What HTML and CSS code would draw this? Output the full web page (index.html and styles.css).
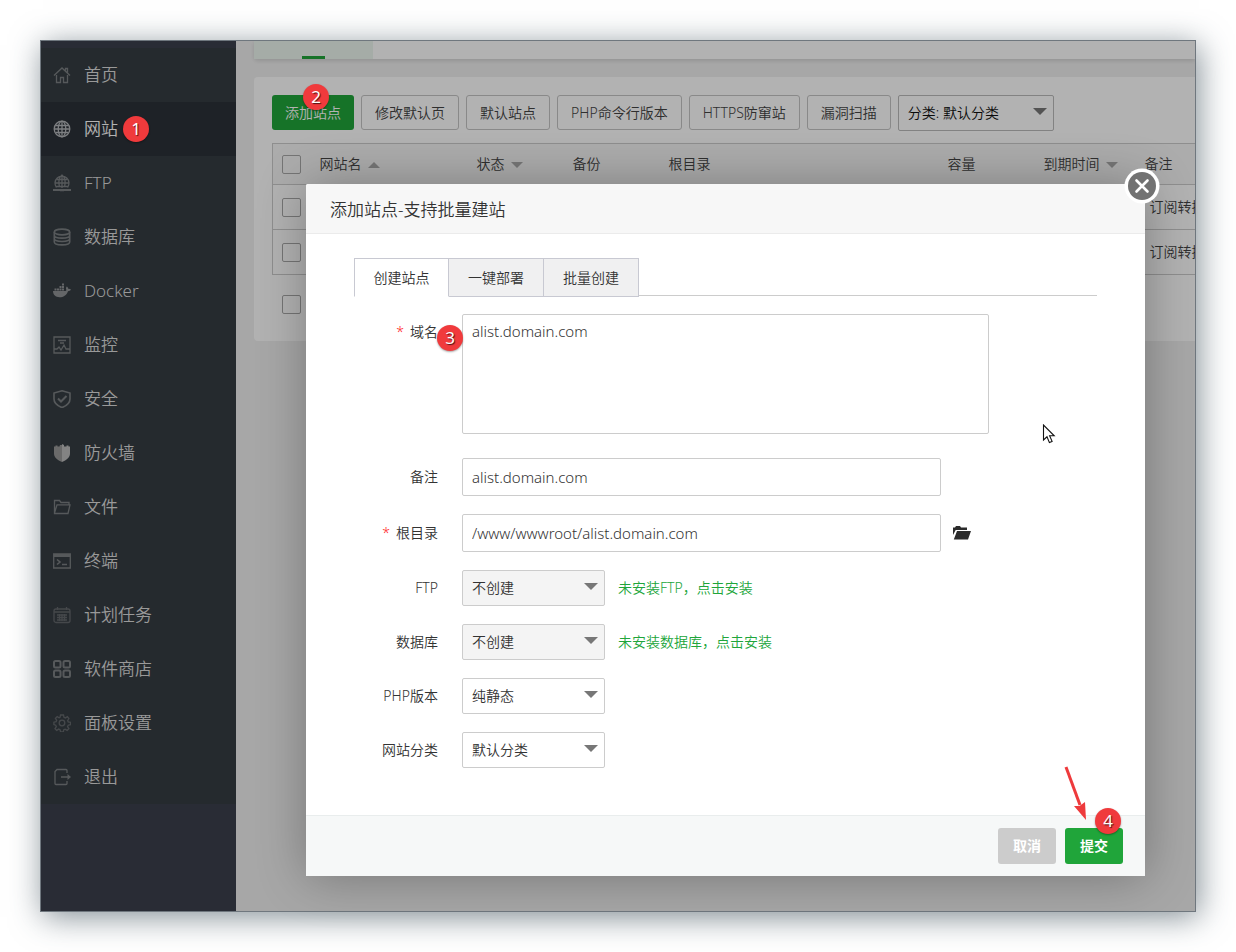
FILE: index.html
```html
<!DOCTYPE html>
<html lang="zh-CN">
<head>
<meta charset="utf-8">
<title>添加站点</title>
<link rel="stylesheet" href="styles.css">
</head>
<body>
<div class="window">
  <nav class="sidebar">
    <ul class="menu">
      <li><a href="#home"><svg class="icon" viewBox="0 0 18 18"><path d="M1 9.500 9 2l8 7.500M3.500 9v7.500h4v-5h3v5h4V9M12.500 4.500V2.500h2v4"/></svg>首页</a></li>
      <li><a href="#site" class="current"><svg class="icon bright" viewBox="0 0 18 18"><circle cx="9" cy="9" r="7.800"/><ellipse cx="9" cy="9" rx="3.800" ry="7.800"/><path d="M9 1.500v15M1.500 9h15M2.500 5.500h13M2.500 12.500h13"/></svg>网站<span class="badge badge-inline">1</span></a></li>
      <li><a href="#ftp"><svg class="icon" viewBox="0 0 18 18"><path d="M3.500 13.500a7 7 0 1 1 11 0M2.500 9h13M4 5.500h10M3.500 12.500h11M9 1v13M6.500 13C5 8 6 3 9 1c3 2 4 7 2.500 12"/><path d="M0 16h18M7 16.300h4" stroke-width="2"/></svg>FTP</a></li>
      <li><a href="#db"><svg class="icon" viewBox="0 0 18 18"><g stroke-width="1.600"><ellipse cx="9" cy="4" rx="7.700" ry="2.900"/><path d="M1.300 4v10c0 3.800 15.400 3.800 15.400 0V4M1.300 7.300c0 3.800 15.400 3.800 15.400 0M1.300 10.600c0 3.800 15.400 3.800 15.400 0"/></g></svg>数据库</a></li>
      <li><a href="#docker"><svg class="icon solid" viewBox="0 0 18 18"><path d="M0 9h12.500c.7 0 1-.5.800-1.200-.6-1.400-.3-2.500.5-3.300.9.600 1.300 1.400 1.400 2.300.9-.2 1.900 0 2.800.7-.7 1.200-1.600 1.700-3 1.700-1.500 4.300-4.500 6-8.500 6C2.500 15.200.2 13 0 9zM1.500 6.500h2v2h-2zM4 6.500h2v2H4zM6.500 6.500h2v2h-2zM9 6.500h2v2H9zM6.500 4h2v2h-2zM9 4h2v2H9zM9 1.500h2v2H9z"/></svg>Docker</a></li>
      <li><a href="#monitor"><svg class="icon" viewBox="0 0 18 18"><path d="M1 1h16v16H1zM5 4.500h8M7 7h4M1 13h3l2-2 2 3 3-5 2 4h4"/></svg>监控</a></li>
      <li><a href="#security"><svg class="icon" viewBox="0 0 18 18"><path d="M9 .800 17 3v6c0 4-3.500 6.800-8 8.600C4.500 15.800 1 13 1 9V3z" stroke-width="1.600"/><path d="m5 8.500 3 3L13.500 6" stroke-width="2"/></svg>安全</a></li>
      <li><a href="#firewall"><svg class="icon shield" viewBox="0 0 18 18"><path class="half" d="M1 2.500h1.500V1.500h2v1h2L7 1h2v17c-4.500-2-8-4.500-8-8.500z"/><path class="full" d="M9 0l2 1v1.500h2.500v-1h2v1H17v7c0 4-3.500 6.500-8 8.500z"/></svg>防火墙</a></li>
      <li><a href="#files"><svg class="icon" viewBox="0 0 18 18"><path d="M1.500 15V2.500h5l1.500 2h8V7M1.500 15 4 6.800h13L15 15.500H1.500z"/></svg>文件</a></li>
      <li><a href="#terminal"><svg class="icon" viewBox="0 0 18 18"><path d="M.700 2h16.600v14H.700z"/><path d="M1 3.500h16" stroke-width="3"/><path d="m4 7.500 3 2.500-3 2.500M9 12.500h5" stroke-width="1.600"/></svg>终端</a></li>
      <li><a href="#cron"><svg class="icon dim" viewBox="0 0 18 18"><rect x="1" y="3" width="16" height="13.500" rx="2"/><path d="M1 6h16M4.500 1v3M13.500 1v3M4 9h10M4 11.500h10M4 14h10M6.500 8v7M9 8v7M11.500 8v7"/></svg>计划任务</a></li>
      <li><a href="#soft"><svg class="icon" viewBox="0 0 18 18"><g stroke-width="2"><rect x="1" y="1" width="6.500" height="6.500" rx="1.500"/><rect x="10.500" y="1" width="6.500" height="6.500" rx="1.500"/><rect x="1" y="10.500" width="6.500" height="6.500" rx="1.500"/><rect x="10.500" y="10.500" width="6.500" height="6.500" rx="1.500"/></g></svg>软件商店</a></li>
      <li><a href="#config"><svg class="icon dim" viewBox="0 0 18 18"><circle cx="9" cy="9" r="2.800"/><path d="M7.500 1h3l.5 2.300 1.400.6 2-1.300 1.500 2-1.200 1.900.5 1.400 2.300.5v2.200l-2.300.6-.6 1.400 1.300 2-1.800 1.800-2-1.200-1.300.5-.5 2.300H7.600l-.6-2.300-1.300-.6-2 1.300-1.700-1.800 1.300-2-.6-1.400L.900 10.500V8.200l2.200-.5.600-1.400-1.300-2 1.800-1.700 1.900 1.200L7 3.300z"/></svg>面板设置</a></li>
      <li><a href="#exit"><svg class="icon" viewBox="0 0 18 18"><path d="M14 5V2.500a1 1 0 0 0-1-1H4L2 3.500v12a1 1 0 0 0 1 1h10a1 1 0 0 0 1-1V13M8 9h8"/><path d="m14.500 6 3.500 3-3.500 3z" fill="currentColor" stroke="none"/></svg>退出</a></li>
    </ul>
  </nav>

  <main class="content">
    <div class="top-tabs"><span class="top-tab"></span></div>
    <section class="card">
      <div class="toolbar">
        <button type="button" class="tool tool-primary">添加站点<span class="badge badge-over">2</span></button>
        <button type="button" class="tool">修改默认页</button>
        <button type="button" class="tool">默认站点</button>
        <button type="button" class="tool">PHP命令行版本</button>
        <button type="button" class="tool">HTTPS防窜站</button>
        <button type="button" class="tool">漏洞扫描</button>
        <span class="select select-wide"><select aria-label="分类"><option>分类: 默认分类</option></select></span>
      </div>
      <table class="sites">
        <colgroup><col class="c-check"><col class="c-name"><col class="c-small"><col class="c-small"><col class="c-root"><col class="c-small"><col class="c-date"><col class="c-note"></colgroup>
        <thead>
          <tr><th><input type="checkbox" aria-label="全选"></th><th>网站名<i class="sort sort-up"></i></th><th>状态<i class="sort"></i></th><th>备份</th><th>根目录</th><th>容量</th><th>到期时间<i class="sort"></i></th><th>备注</th></tr>
        </thead>
        <tbody>
          <tr><td><input type="checkbox" aria-label="选择站点"></td><td></td><td></td><td></td><td></td><td></td><td></td><td class="note">订阅转换</td></tr>
          <tr><td><input type="checkbox" aria-label="选择站点"></td><td></td><td></td><td></td><td></td><td></td><td></td><td class="note">订阅转换</td></tr>
        </tbody>
      </table>
      <div class="batch"><input type="checkbox" aria-label="批量选择"></div>
    </section>
  </main>

  <div class="overlay">
    <form class="dialog" role="dialog" aria-labelledby="dialog-title">
      <header class="dialog-head"><h1 id="dialog-title">添加站点-支持批量建站</h1></header>
      <button type="button" class="close" aria-label="关闭"><svg viewBox="0 0 36 36"><circle cx="18" cy="18" r="17.500" fill="#fff"/><circle cx="18" cy="18" r="14" fill="#727272"/><path d="m12.500 12.500 11 11m0-11-11 11" stroke="#fff" stroke-width="2.600" stroke-linecap="round"/></svg></button>
      <div class="dialog-body">
        <div class="tabs" role="tablist">
          <button type="button" role="tab" aria-selected="true" class="tab tab-on">创建站点</button>
          <button type="button" role="tab" class="tab">一键部署</button>
          <button type="button" role="tab" class="tab">批量创建</button>
        </div>
        <div class="row row-top">
          <label for="domain"><em>*</em>域名</label>
          <span class="field"><textarea id="domain">alist.domain.com</textarea><span class="badge badge-side">3</span></span>
        </div>
        <div class="row"><label for="note">备注</label><input type="text" class="text" id="note" value="alist.domain.com"></div>
        <div class="row"><label for="root"><em>*</em>根目录</label><input type="text" class="text" id="root" value="/www/wwwroot/alist.domain.com"><button type="button" class="browse" aria-label="选择目录"><svg viewBox="0 0 18 14"><path fill="#2b2b2b" d="M0 9V1.500h2L3 0h4l1 1.500h6V4H2.700zM4 5h14l-3 8.500H.800z"/></svg></button></div>
        <div class="row"><label for="ftp">FTP</label><span class="select select-off"><select id="ftp"><option>不创建</option></select></span><a class="install" href="#install-ftp">未安装FTP，点击安装</a></div>
        <div class="row"><label for="db">数据库</label><span class="select select-off"><select id="db"><option>不创建</option></select></span><a class="install" href="#install-db">未安装数据库，点击安装</a></div>
        <div class="row"><label for="php">PHP版本</label><span class="select"><select id="php"><option>纯静态</option></select></span></div>
        <div class="row"><label for="type">网站分类</label><span class="select"><select id="type"><option>默认分类</option></select></span></div>
      </div>
      <footer class="dialog-foot">
        <button type="button" class="action">取消</button>
        <button type="submit" class="action action-ok">提交<span class="badge badge-corner">4</span></button>
      </footer>
      <svg class="arrow" viewBox="0 0 24 56"><path d="M2 2 16 40" stroke="#ee3a3c" stroke-width="3"/><path d="M22 55 10 41l5.500 0L21 37z" fill="#ee3a3c"/></svg>
      <svg class="cursor" viewBox="0 0 14 20"><path d="M1.500 1v15l3.500-3.200L7.400 18.600l2.700-1.200-2.500-5.600h4.600z" fill="#fff" stroke="#111" stroke-width="1.100"/></svg>
    </form>
  </div>
</div>
</body>
</html>
```

FILE: styles.css
```css
* { box-sizing: border-box; }

body {
  margin: 0;
  padding: 40px;
  min-height: 100vh;
  display: flex;
  background: #fff;
  color: #333;
  font: 350 14px/20px "Noto Sans", "Noto Sans CJK SC", sans-serif;
}

button, input, select, textarea { font: inherit; color: inherit; margin: 0; }
a { text-decoration: none; color: inherit; }

.window {
  position: relative;
  flex: 1;
  min-width: 0;
  display: flex;
  border: 1px solid #6f777e;
  background: #f0f0f0;
  box-shadow: 3px 5px 30px rgba(50, 68, 80, .6);
}

/* Sidebar */
.sidebar { flex: 0 0 195px; padding-top: 7px; background: #3c404d; }
.menu { list-style: none; margin: 0; padding: 0; background: #363d43; }
.menu a {
  display: flex;
  align-items: center;
  height: 54px;
  padding-left: 12px;
  color: #dcdcdc;
  font-size: 17px;
}
.menu a.current { background: #2c3138; color: #fff; }
.icon {
  width: 18px;
  height: 18px;
  margin-right: 13px;
  fill: none;
  stroke: currentColor;
  stroke-width: 1.3;
  color: #7c8083;
}
.icon.bright { color: #b4b7ba; }
.icon.dim { color: #64686c; }
.icon.solid { fill: #909396; stroke: none; }
.icon.shield { stroke: none; }
.half { fill: #999; }
.full { fill: #bcbcbc; }

/* Numbered step markers */
.badge {
  z-index: 5;
  width: 26px;
  height: 26px;
  border-radius: 50%;
  background: #f03a3c;
  color: #fff;
  font-size: 17px;
  font-weight: 400;
  line-height: 26px;
  text-align: center;
  text-shadow: 1px 1px 1px rgba(0, 0, 0, .7);
  box-shadow: 0 1px 2px rgba(0, 0, 0, .35);
  pointer-events: none;
}
.badge-inline { position: relative; margin-left: 5px; }
.badge-over { position: absolute; left: 31px; top: -11px; }
.badge-side { position: absolute; left: -25px; top: 11px; }
.badge-corner { position: absolute; right: 2px; top: -20px; }

/* Page behind the dialog */
.content { flex: 1; min-width: 0; padding-left: 18px; overflow: hidden; }
.top-tabs { height: 18px; background: #fff; border-radius: 0 0 0 4px; box-shadow: 0 2px 4px rgba(0, 0, 0, .12); }
.top-tab { display: block; width: 119px; height: 18px; background: linear-gradient(#20a53a, #20a53a) center bottom / 23px 3px no-repeat #edf6ef; }
.card { margin-top: 18px; padding: 18px 0 27px 18px; background: #fff; border-radius: 4px 0 0 4px; }
.toolbar { display: flex; gap: 7px; }
.tool {
  position: relative;
  height: 35px;
  padding: 0 13px;
  border: 1px solid #c4c4c4;
  border-radius: 3px;
  background: #fff;
  color: #444;
  white-space: nowrap;
}
.tool-primary { border: 0; background: #20a53a; color: #fff; }

.sites { table-layout: fixed; width: 1040px; margin-top: 12px; border-collapse: collapse; border: 1px solid #ccc; }
.sites tr { height: 45px; border-bottom: 1px solid #ccc; }
.sites thead tr { height: 41px; background: #f6f6f6; }
.sites th, .sites td { padding: 0 0 0 9px; text-align: left; font-weight: 350; white-space: nowrap; color: #444; }
.sites .note { padding-left: 14px; }
.c-check { width: 38px; }
.c-name { width: 157px; }
.c-small { width: 96px; }
.c-root { width: 279px; }
.c-date { width: 101px; }
input[type="checkbox"] {
  display: block;
  width: 19px;
  height: 19px;
  appearance: none;
  border: 1px solid #a8a8a8;
  border-radius: 2px;
}
.batch { padding: 20px 0 0 10px; }
.sort {
  display: inline-block;
  margin-left: 6px;
  vertical-align: 1px;
  border: 6px solid transparent;
  border-top: 6px solid #aaa;
  border-bottom: 0;
}
.sort-up { border-top: 0; border-bottom: 6px solid #aaa; }

/* Select boxes */
.select { position: relative; display: flex; width: 143px; height: 36px; }
.select::after {
  content: "";
  position: absolute;
  right: 7px;
  top: 13px;
  border: 7px solid transparent;
  border-top-color: #777;
  border-bottom: 0;
  pointer-events: none;
}
.select select { flex: 1; padding: 0 9px; appearance: none; border: 1px solid #ccc; border-radius: 2px; background: #fff; }
.select-off select { background: #f4f4f4; }
.select-wide { width: 156px; }
.select-wide select { border-color: #bbb; color: #111; }

/* Dialog */
.overlay { position: absolute; inset: 0; z-index: 2; display: flex; padding: 143px 50px 35px 265px; background: rgba(0, 0, 0, .3); }
.dialog {
  position: relative;
  flex: 1;
  min-width: 0;
  display: flex;
  flex-direction: column;
  border-radius: 2px;
  background: #fff;
  box-shadow: 1px 1px 50px rgba(0, 0, 0, .3);
}
.dialog-head { padding: 16px 24px 13px; border-bottom: 1px solid #ebebeb; background: #f7f7f7; border-radius: 2px 2px 0 0; }
.dialog-head h1 { margin: 0; font-size: 17px; font-weight: 350; line-height: 20px; }
.close { position: absolute; right: -15px; top: -16px; width: 36px; height: 36px; padding: 0; border: 0; background: none; }
.close svg, .browse svg { display: block; width: 100%; }
.dialog-body { flex: 1; display: flex; flex-direction: column; gap: 18px; padding: 24px 48px; }

.tabs { display: flex; height: 38px; border-bottom: 1px solid #ccc; }
.tab {
  flex: 0 0 95px;
  height: 39px;
  padding: 0;
  border: 1px solid #c8c9d2;
  border-left-width: 0;
  background: #f0f0f1;
}
.tab-on { border-left-width: 1px; border-bottom-color: #fff; background: #fff; }

.row { display: flex; align-items: center; }
.row label { flex: 0 0 84px; margin-right: 24px; text-align: right; white-space: nowrap; }
.row-top { align-items: flex-start; margin-bottom: 6px; }
.row-top label { line-height: 36px; }
.row em { margin-right: 6px; color: #f22; font-style: normal; }
.field { position: relative; flex: 0 1 527px; display: flex; }
.field textarea { flex: 1; min-width: 0; height: 120px; padding: 6px 9px; border: 1px solid #ccc; border-radius: 2px; resize: none; font-size: 15px; }
.text { flex: 0 1 479px; min-width: 0; height: 38px; padding: 0 9px; border: 1px solid #ccc; border-radius: 2px; background: #fff; font-size: 15px; }
.browse { width: 18px; margin-left: 12px; padding: 0; border: 0; background: none; }
.install { margin-left: 13px; color: #20a53a; }

.dialog-foot { display: flex; justify-content: flex-end; gap: 9px; padding: 12px 22px; border-top: 1px solid #e9eded; background: #f6f8f8; }
.action { position: relative; width: 58px; height: 36px; padding: 0; border: 0; border-radius: 3px; background: #ccc; color: #fff; font-weight: 700; }
.action-ok { background: #20a53a; }
.arrow { position: absolute; right: 57px; bottom: 55px; width: 24px; height: 56px; fill: none; }
.cursor { position: absolute; right: 89px; top: 240px; width: 14px; height: 20px; }
```
